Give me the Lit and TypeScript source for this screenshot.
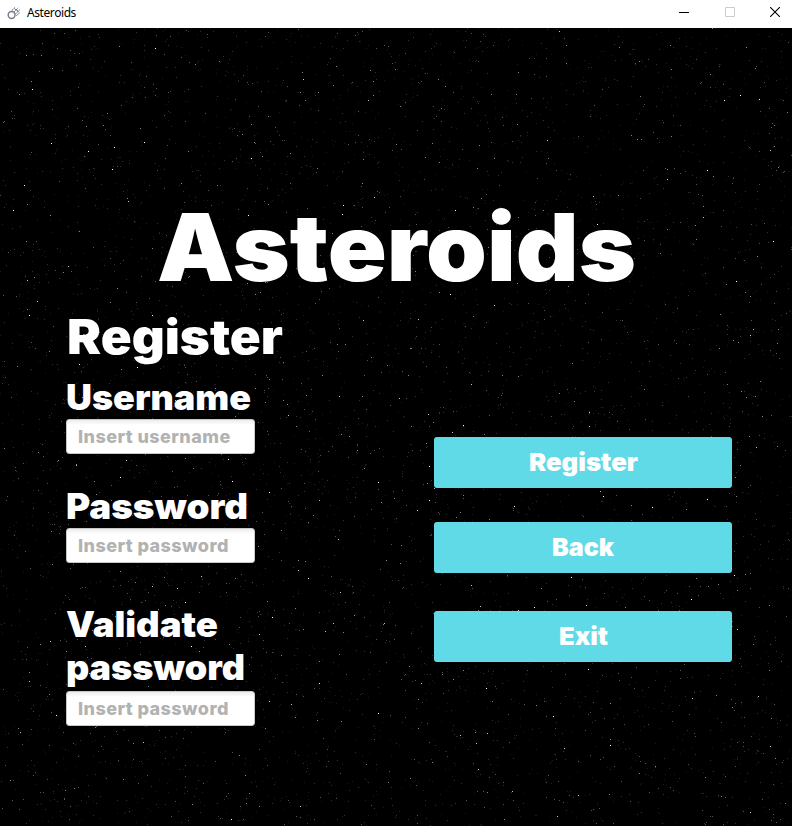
import { LitElement, html, css, svg } from "lit";
import { customElement, property } from "lit/decorators.js";

const SKY_W = 792;
const SKY_H = 798;

// The brightest stars of the sky, as [x, y] inside the playfield.
const BRIGHT: number[][] = [
  [155, 20], [32, 61], [51, 115], [88, 123], [114, 119], [144, 114], [24, 157], [251, 130],
  [343, 177], [248, 187], [342, 186], [429, 438], [429, 472], [514, 478], [603, 468], [652, 479],
  [707, 471], [534, 579], [571, 549], [691, 571], [463, 397], [588, 641], [185, 574], [56, 687],
  [156, 640], [191, 618], [450, 266], [455, 182], [597, 196],
];

// Small linear congruential generator: the sky is the same at every start.
function buildSky() {
  let seed = 90210;
  const rnd = () => {
    seed = (seed * 1664525 + 1013904223) >>> 0;
    return seed / 4294967296;
  };
  const layers = [
    { fill: "#1c1c1c", count: 2900, d: "" },
    { fill: "#333333", count: 1750, d: "" },
    { fill: "#565656", count: 900, d: "" },
    { fill: "#858585", count: 330, d: "" },
    { fill: "#c4c4c4", count: 90, d: "" },
    { fill: "#ffffff", count: 30, d: "" },
  ];
  for (const layer of layers) {
    for (let i = 0; i < layer.count; i++) {
      layer.d += `M${Math.floor(rnd() * SKY_W)} ${Math.floor(rnd() * SKY_H)}h1v1h-1z`;
    }
  }
  for (const [x, y] of BRIGHT) layers[5].d += `M${x} ${y}h1v1h-1z`;
  return layers;
}

const SKY = buildSky();

@customElement("star-sky")
class StarSky extends LitElement {
  static styles = css`
    :host { display: block; }
    svg { display: block; width: 100%; height: 100%; }
  `;
  render() {
    return html`<svg viewBox="0 0 792 798" shape-rendering="crispEdges" aria-hidden="true">
      ${SKY.map((l) => svg`<path fill=${l.fill} d=${l.d}></path>`)}
    </svg>`;
  }
}

@customElement("wide-text")
class WideText extends LitElement {
  @property() text = "";
  @property({ type: Number }) size = 24;
  @property({ type: Number }) width = 100;
  @property({ type: Number }) height = 30;
  @property({ type: Number }) base = 24;
  static styles = css`
    :host { display: block; }
    svg { display: block; overflow: visible; }
    text { font-family: Inter, "Noto Sans", sans-serif; font-weight: 900; fill: #fff; }
  `;
  render() {
    return html`<svg width=${this.width} height=${this.height}>
      <text x="0" y=${this.base} font-size=${this.size} textLength=${this.width}
        lengthAdjust="spacingAndGlyphs">${this.text}</text>
    </svg>`;
  }
}

@customElement("app-root")
class AppRoot extends LitElement {
  static styles = css`
    :host { display: block; width: 792px; height: 826px; overflow: hidden; background: #000; }
    * { box-sizing: border-box; }
    .bar { height: 28px; background: #fff; display: flex; align-items: center; padding-left: 7px; }
    .bar svg { display: block; }
    .name { font: 12px/16px "Noto Sans", "Open Sans", sans-serif; color: #000; margin: 0 auto 3px 6px; letter-spacing: -0.42px; }
    .controls { display: flex; margin: 0 -6px 4px 0; }
    .control { width: 45.5px; height: 24px; display: grid; place-items: center; }
    .field { position: relative; height: 798px; }
    star-sky { position: absolute; inset: 0; }
    .content { position: relative; height: 798px; padding-top: 173px; }
    .title { height: 110px; padding-left: 157px; }
    .columns { display: grid; grid-template-columns: 368px 298px; padding-left: 66px; }
    .heading { height: 66px; padding-left: 1px; }
    .group { display: flex; flex-direction: column; height: 109px; }
    .group.tall { height: 170px; }
    .label { height: 42px; }
    .tall .label { height: 96px; }
    input {
      width: 189px; height: 35px; border: 1px solid #c8c8c8; border-radius: 3px; padding: 0 0 1px 11px;
      margin: 0; background: linear-gradient(#ececec, #fff 5px); outline: none;
      font: 800 18px/33px Inter, "Noto Sans", sans-serif; letter-spacing: 0.43px;
    }
    input::placeholder { color: #b2b2b2; opacity: 1; }
    .actions { padding-top: 126px; }
    button {
      display: flex; justify-content: center; align-items: flex-start; width: 298px; height: 51px;
      margin: 0 0 34px; padding: 0; border: 0; border-radius: 3px; background: #61dae8;
    }
    button.back { margin-bottom: 38px; }
  `;
  render() {
    return html`
      <header class="bar">
        <svg width="14" height="16" viewBox="0 0 14 16" fill="none" stroke="#5d6268" stroke-width="1">
          <circle cx="4.6" cy="9" r="3.4" stroke="#77808a" stroke-width="1.5"></circle>
          <path d="M4.8 4.6 8 1.5M7.2 5.8 11.2 1.8M8.7 7.8 13 3.5M9.3 9.8 12.5 6.8M7.8 2.6l2.4 2.4M10 4.3l2.2 2" stroke-dasharray="2 .6"></path>
        </svg>
        <span class="name">Asteroids</span>
        <div class="controls">
          <span class="control"><svg width="10" height="10"><path d="M0 5.5h10" stroke="#000"></path></svg></span>
          <span class="control"><svg width="10" height="10"><path d="M.5.5h9v9h-9z" fill="none" stroke="#ccc"></path></svg></span>
          <span class="control"><svg width="10" height="10"><path d="M0 0l10 10M10 0L0 10" stroke="#000" stroke-width="1.1"></path></svg></span>
        </div>
      </header>
      <main class="field">
        <star-sky></star-sky>
        <div class="content">
          <div class="title"><wide-text text="Asteroids" size="93" width="479" height="100" base="80"></wide-text></div>
          <div class="columns">
            <form>
              <div class="heading"><wide-text text="Register" size="48" width="216" height="60" base="43"></wide-text></div>
              <div class="group">
                <div class="label"><wide-text text="Username" size="35" width="185" height="42" base="32.5"></wide-text></div>
                <input placeholder="Insert username" />
              </div>
              <div class="group">
                <div class="label"><wide-text text="Password" size="35" width="182" height="42" base="32.5"></wide-text></div>
                <input placeholder="Insert password" />
              </div>
              <div class="group tall">
                <div class="label">
                  <wide-text text="Validate" size="35" width="152" height="43" base="41.5"></wide-text>
                  <wide-text text="password" size="35" width="179" height="43" base="41.5"></wide-text>
                </div>
                <input placeholder="Insert password" />
              </div>
            </form>
            <div class="actions">
              <button><wide-text text="Register" size="24.7" width="109" height="51" base="34"></wide-text></button>
              <button class="back"><wide-text text="Back" size="24.7" width="62" height="51" base="34"></wide-text></button>
              <button><wide-text text="Exit" size="24.7" width="49" height="51" base="34"></wide-text></button>
            </div>
          </div>
        </div>
      </main>`;
  }
}
